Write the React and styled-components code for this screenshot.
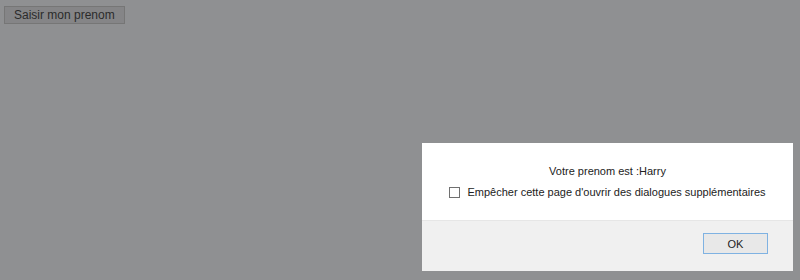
import React from 'react';
import styled, { createGlobalStyle } from 'styled-components';

const GlobalStyle = createGlobalStyle`
  html, body {
    margin: 0;
    padding: 0;
    background: #8f9092;
  }
  body {
    font-family: "Liberation Sans", Arial, sans-serif;
  }
`;

const Page = styled.div`
  position: relative;
  width: 800px;
  height: 280px;
  background: #8f9092;
  overflow: hidden;
`;

const PageButton = styled.button`
  margin: 6px 0 0 4px;
  height: 18px;
  padding: 0 9px;
  border: 1px solid #767676;
  background: #858587;
  color: #2b2b2b;
  font-family: "Liberation Sans", Arial, sans-serif;
  font-size: 12px;
  line-height: 16px;
`;

const Dialog = styled.div`
  position: absolute;
  left: 422px;
  top: 143px;
  width: 371px;
  height: 128px;
  background: #ffffff;
  display: flex;
  flex-direction: column;
`;

const Body = styled.div`
  height: 77px;
  box-sizing: border-box;
  padding-top: 22px;
  display: flex;
  flex-direction: column;
  align-items: center;
  gap: 8px;
  font-size: 11px;
  line-height: 13px;
  color: #222;
`;

const Message = styled.div``;

const CheckRow = styled.label`
  display: flex;
  align-items: center;
  gap: 7px;
`;

const Box = styled.span`
  width: 9px;
  height: 9px;
  border: 1px solid #707070;
  background: #fff;
`;

const Footer = styled.div`
  flex: 1;
  background: #f0f0f0;
  border-top: 1px solid #e6e6e6;
  display: flex;
  justify-content: flex-end;
  align-items: flex-start;
  padding: 12px 25px 0 0;
`;

const OkButton = styled.button`
  width: 65px;
  height: 21px;
  border: 1px solid #7fb2e2;
  background: #e8e8e8;
  color: #222;
  font-family: "Liberation Sans", Arial, sans-serif;
  font-size: 11px;
  padding: 0;
`;

export default function App() {
  return (
    <>
      <GlobalStyle />
      <Page>
        <PageButton>Saisir mon prenom</PageButton>
        <Dialog>
          <Body>
            <Message>Votre prenom est :Harry</Message>
            <CheckRow>
              <Box />
              Empêcher cette page d'ouvrir des dialogues supplémentaires
            </CheckRow>
          </Body>
          <Footer>
            <OkButton>OK</OkButton>
          </Footer>
        </Dialog>
      </Page>
    </>
  );
}
